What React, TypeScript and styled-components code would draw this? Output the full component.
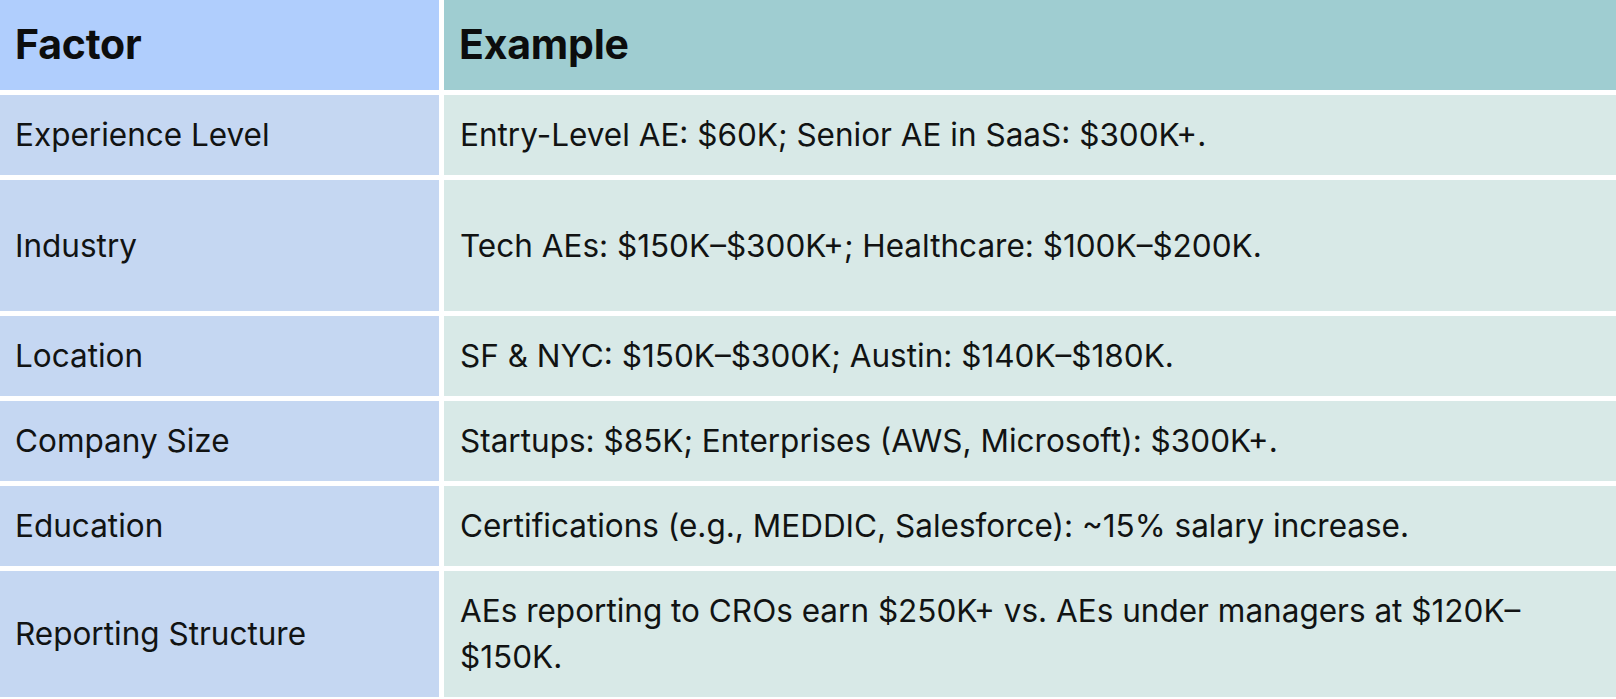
import React from "react";
import styled, { createGlobalStyle } from "styled-components";

const GlobalStyle = createGlobalStyle`
  html, body { margin: 0; padding: 0; background: #ffffff; }
  body { font-family: Inter, "Noto Sans", sans-serif; color: #0f1111; }
`;

const Table = styled.div`
  display: grid;
  grid-template-columns: 439px 1fr;
  column-gap: 5px;
  row-gap: 5px;
  width: 1616px;
  background: #ffffff;
`;

const HeadCell = styled.div<{ $alt?: boolean }>`
  height: 90px;
  box-sizing: border-box;
  display: flex;
  align-items: center;
  padding: 0 16px 2px 15px;
  background: ${(p) => (p.$alt ? "#9fcdd1" : "#b0cefd")};
  font-size: 41px;
  font-weight: 700;
  letter-spacing: -0.2px;
  color: #0c0d0d;
`;

const Cell = styled.div<{ $alt?: boolean; $tall?: boolean }>`
  box-sizing: border-box;
  min-height: ${(p) => (p.$tall ? "131px" : "80px")};
  display: flex;
  align-items: center;
  padding: 17px ${(p) => (p.$alt ? "50px" : "16px")} 17px ${(p) => (p.$alt ? "16px" : "15px")};
  background: ${(p) => (p.$alt ? "#d8e9e7" : "#c5d7f2")};
  font-size: 31.5px;
  line-height: 46px;
  font-weight: 400;
  color: #111313;
`;

const rows: { factor: string; example: string; tall?: boolean }[] = [
  { factor: "Experience Level", example: "Entry-Level AE: $60K; Senior AE in SaaS: $300K+." },
  { factor: "Industry", example: "Tech AEs: $150K–$300K+; Healthcare: $100K–$200K.", tall: true },
  { factor: "Location", example: "SF & NYC: $150K–$300K; Austin: $140K–$180K." },
  { factor: "Company Size", example: "Startups: $85K; Enterprises (AWS, Microsoft): $300K+." },
  { factor: "Education", example: "Certifications (e.g., MEDDIC, Salesforce): ~15% salary increase." },
  {
    factor: "Reporting Structure",
    example: "AEs reporting to CROs earn $250K+ vs. AEs under managers at $120K–$150K.",
  },
];

export default function App() {
  return (
    <>
      <GlobalStyle />
      <Table>
        <HeadCell>Factor</HeadCell>
        <HeadCell $alt>Example</HeadCell>
        {rows.map((r) => (
          <React.Fragment key={r.factor}>
            <Cell $tall={r.tall}>{r.factor}</Cell>
            <Cell $alt $tall={r.tall}>{r.example}</Cell>
          </React.Fragment>
        ))}
      </Table>
    </>
  );
}
